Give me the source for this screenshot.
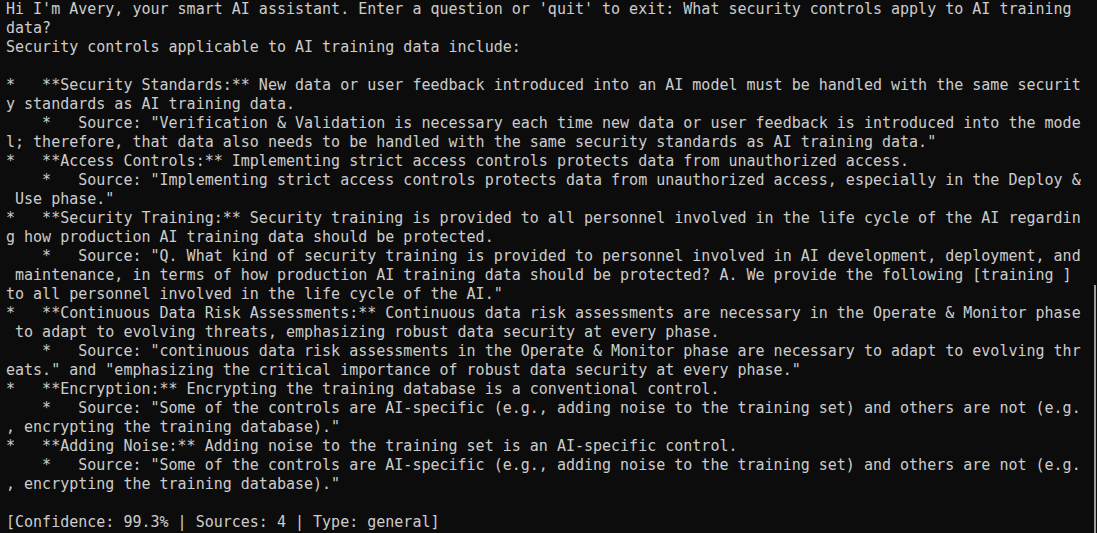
const lines = [
  "Hi I'm Avery, your smart AI assistant. Enter a question or 'quit' to exit: What security controls apply to AI training",
  "data?",
  "Security controls applicable to AI training data include:",
  "",
  "*   **Security Standards:** New data or user feedback introduced into an AI model must be handled with the same securit",
  "y standards as AI training data.",
  "    *   Source: \"Verification & Validation is necessary each time new data or user feedback is introduced into the mode",
  "l; therefore, that data also needs to be handled with the same security standards as AI training data.\"",
  "*   **Access Controls:** Implementing strict access controls protects data from unauthorized access.",
  "    *   Source: \"Implementing strict access controls protects data from unauthorized access, especially in the Deploy &",
  " Use phase.\"",
  "*   **Security Training:** Security training is provided to all personnel involved in the life cycle of the AI regardin",
  "g how production AI training data should be protected.",
  "    *   Source: \"Q. What kind of security training is provided to personnel involved in AI development, deployment, and",
  " maintenance, in terms of how production AI training data should be protected? A. We provide the following [training ]",
  "to all personnel involved in the life cycle of the AI.\"",
  "*   **Continuous Data Risk Assessments:** Continuous data risk assessments are necessary in the Operate & Monitor phase",
  " to adapt to evolving threats, emphasizing robust data security at every phase.",
  "    *   Source: \"continuous data risk assessments in the Operate & Monitor phase are necessary to adapt to evolving thr",
  "eats.\" and \"emphasizing the critical importance of robust data security at every phase.\"",
  "*   **Encryption:** Encrypting the training database is a conventional control.",
  "    *   Source: \"Some of the controls are AI-specific (e.g., adding noise to the training set) and others are not (e.g.",
  ", encrypting the training database).\"",
  "*   **Adding Noise:** Adding noise to the training set is an AI-specific control.",
  "    *   Source: \"Some of the controls are AI-specific (e.g., adding noise to the training set) and others are not (e.g.",
  ", encrypting the training database).\"",
  "",
  "[Confidence: 99.3% | Sources: 4 | Type: general]",
];

export default function App() {
  return (
    <div className="relative w-[1097px] h-[533px] overflow-hidden bg-[#0c0c0c]">
      {/* terminal output */}
      <div className="pl-[6px] text-[#cccccc] text-[15px] leading-[19px] font-['DejaVu_Sans_Mono',monospace]">
        {lines.map((line, i) => (
          <div key={i} className="whitespace-pre h-[19px]">
            {line}
          </div>
        ))}
      </div>

      {/* scrollbar thumb */}
      <div className="absolute right-[1px] top-[285px] bottom-0 w-[2px] bg-[#9e9e9e]" />
    </div>
  );
}
